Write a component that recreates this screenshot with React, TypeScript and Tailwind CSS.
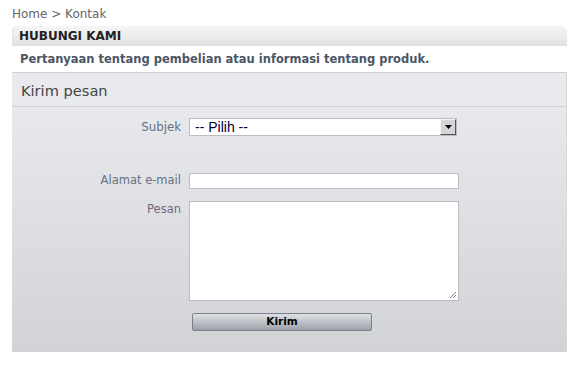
import React from "react";

export default function App() {
  return (
    <div
      className="w-[579px] h-[385px] bg-white overflow-hidden"
      style={{ fontFamily: '"DejaVu Sans", Verdana, sans-serif' }}
    >
      <div className="px-[12px]">
        <div className="h-[26px] pt-[6px] text-[12px] leading-[16px] text-[#666]">
          Home &gt; Kontak
        </div>
        <div className="h-[20px] rounded-t-[5px] bg-gradient-to-b from-[#f6f6f6] to-[#e1e1e1] px-[6px] font-bold text-[12px] leading-[20px] text-[#222] border-l border-[#e4e4e4]">
          HUBUNGI KAMI
        </div>
        <div className="h-[26px] px-[8px] font-bold text-[11.5px] leading-[27px] text-[#4a5666]">
          Pertanyaan tentang pembelian atau informasi tentang produk.
        </div>
        <div className="border-t border-[#cfd0d3] border-r border-r-[#d8d9dc]">
          <div className="h-[34px] bg-[#e9eaed] border-b border-[#cfd0d3] px-[9px] text-[14.6px] leading-[35px] text-[#444]">
            Kirim pesan
          </div>
          <div className="h-[245px] bg-gradient-to-b from-[#e8e9ec] to-[#d2d3d7] pt-[11px]">
            <div className="flex">
              <div className="w-[169px] text-right text-[11.8px] leading-[14px] pt-[2px] text-[#667185]">
                Subjek
              </div>
              <div className="ml-[8px] w-[268px] h-[18px] bg-white border border-[#bbbdc2] flex items-center">
                <span
                  className="flex-1 pl-[5px] text-[14px] text-[#000033] leading-[16px]"
                  style={{ fontFamily: '"Liberation Sans", Arial, sans-serif' }}
                >
                  -- Pilih --
                </span>
                <div className="w-[16px] h-[16px] border border-t-[#f4f4f4] border-l-[#f4f4f4] border-r-[#555] border-b-[#555] bg-[#d6d6d6] flex items-center justify-center">
                  <svg width="7" height="4" viewBox="0 0 7 4">
                    <path d="M0 0 H7 L3.5 4 Z" fill="#000" />
                  </svg>
                </div>
              </div>
            </div>
            <div className="flex mt-[37px]">
              <div className="w-[169px] text-right text-[11.5px] leading-[14px] pt-[0px] text-[#667185]">
                Alamat e-mail
              </div>
              <div className="ml-[8px] w-[270px] h-[16px] bg-white border border-[#bbbdc2]" />
            </div>
            <div className="flex mt-[12px]">
              <div className="w-[169px] text-right text-[11.5px] leading-[14px] pt-[1px] text-[#6f6a7a]">
                Pesan
              </div>
              <div className="ml-[8px] w-[270px] h-[100px] bg-white border border-[#bbbdc2] relative">
                <svg
                  className="absolute right-[1px] bottom-[1px]"
                  width="8"
                  height="8"
                  viewBox="0 0 8 8"
                >
                  <path d="M7 1 L1 7 M7 4 L4 7" stroke="#888" strokeWidth="1" />
                </svg>
              </div>
            </div>
            <div className="flex mt-[12px]">
              <div className="w-[172px]" />
              <div className="ml-[8px] w-[180px] h-[18px] rounded-[2px] border border-[#7b7f87] bg-gradient-to-b from-[#dfe1e5] to-[#9ea2aa] flex items-center justify-center font-bold text-[10.5px] text-black">
                Kirim
              </div>
            </div>
          </div>
        </div>
      </div>
    </div>
  );
}
